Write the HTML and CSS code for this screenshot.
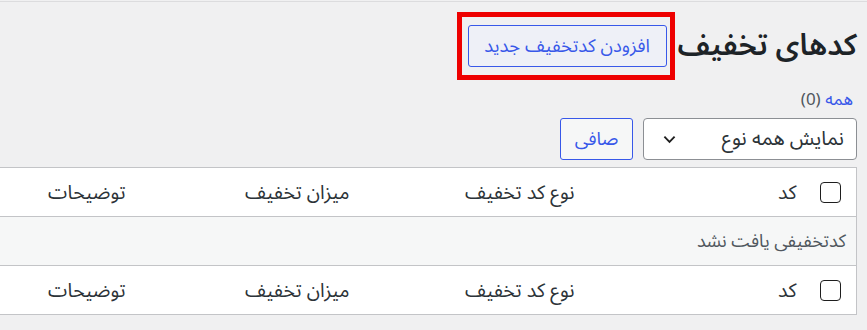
FILE: index.html
```html
<!DOCTYPE html>
<html lang="fa" dir="rtl">
<head>
    <meta charset="UTF-8">
    <meta name="viewport" content="width=device-width, initial-scale=1.0">
    <title>کدهای تخفیف</title>
    <link rel="stylesheet" href="styles.css">
</head>
<body>
    <div class="topline"></div>
    <div class="wrap">
        <!-- Page title with the add button -->
        <div class="page-head">
            <h1>کدهای تخفیف</h1>
            <span class="highlight">
                <a href="#" class="button">افزودن کدتخفیف جدید</a>
            </span>
        </div>

        <ul class="subsubsub">
            <li><a href="#">همه</a> <span class="count">(0)</span></li>
        </ul>

        <!-- Filter controls -->
        <div class="tablenav">
            <div class="select">
                <span>نمایش همه نوع</span>
                <svg class="chevron" viewBox="0 0 14 9">
                    <path d="M1.5 1.5l5.5 5.5 5.5-5.5"/>
                </svg>
            </div>
            <a href="#" class="button small">صافی</a>
        </div>

        <table class="list-table">
            <colgroup>
                <col class="col-cb">
                <col class="col-code">
                <col class="col-type">
                <col class="col-amount">
                <col>
            </colgroup>
            <thead>
                <tr>
                    <td class="cb"><span class="checkbox"></span></td>
                    <th>کد</th>
                    <th>نوع کد تخفیف</th>
                    <th>میزان تخفیف</th>
                    <th>توضیحات</th>
                </tr>
            </thead>
            <tbody>
                <tr class="no-items">
                    <td colspan="5">کدتخفیفی یافت نشد</td>
                </tr>
            </tbody>
            <tfoot>
                <tr>
                    <td class="cb"><span class="checkbox"></span></td>
                    <th>کد</th>
                    <th>نوع کد تخفیف</th>
                    <th>میزان تخفیف</th>
                    <th>توضیحات</th>
                </tr>
            </tfoot>
        </table>
    </div>
</body>
</html>
```

FILE: styles.css
```css
/* Admin list screen, RTL */
body {
    margin: 0;
    background-color: #f0f0f1;
    font-family: "Noto Sans Arabic", "Noto Naskh Arabic", "DejaVu Sans", sans-serif;
    color: #1d2327;
    font-size: 17px;
    overflow: hidden;
}

a {
    color: #3858e9;
    text-decoration: none;
}

.topline {
    height: 1px;
    margin-top: 1px;
    background-color: #dcdcde;
}

.wrap {
    padding-right: 10px;
}

.page-head {
    display: flex;
    align-items: center;
    gap: 3px;
    margin-top: 10px;
}

h1 {
    margin: 0;
    font-size: 30px;
    font-weight: 600;
    line-height: 40px;
}

/* Red annotation box round the add button */
.highlight {
    display: inline-flex;
    border: 5px solid #ee0000;
    padding: 8px 3px 8px 6px;
}

.button {
    display: inline-flex;
    align-items: center;
    justify-content: center;
    box-sizing: border-box;
    width: 199px;
    height: 42px;
    border: 1px solid #3858e9;
    border-radius: 3px;
    background-color: #eef0f7;
    color: #3858e9;
    font-size: 18.4px;
}

.button.small {
    width: 73px;
    background-color: #f6f7f7;
}

.subsubsub {
    list-style: none;
    margin: 10px 0 0;
    padding: 0 4px 0 0;
    font-size: 17px;
    line-height: 20px;
    color: #50575e;
}

.subsubsub a {
    color: #3858e9;
}

.tablenav {
    display: flex;
    gap: 10px;
    margin-top: 8px;
}

.select {
    display: flex;
    align-items: center;
    justify-content: space-between;
    box-sizing: border-box;
    width: 214px;
    height: 42px;
    padding: 0 12px 0 19px;
    border: 1px solid #8c8f94;
    border-radius: 4px;
    background-color: #fff;
    color: #2c3338;
    font-size: 20px;
}

.chevron {
    width: 13px;
    height: 9px;
    fill: none;
    stroke: #1e1e1e;
    stroke-width: 2;
}

/* Coupon table */
.list-table {
    width: 1100px;
    margin-top: 7px;
    table-layout: fixed;
    border-collapse: collapse;
    background-color: #fff;
    border: 1px solid #c3c4c7;
}

.col-cb {
    width: 50px;
}

.col-code {
    width: 222px;
}

.col-type {
    width: 225px;
}

.col-amount {
    width: 224px;
}

.list-table th,
.list-table td {
    height: 48px;
    padding: 0 10px;
    text-align: right;
    font-weight: normal;
    color: #2c3338;
    font-size: 19.5px;
}

.list-table thead tr {
    border-bottom: 1px solid #c3c4c7;
}

.list-table tfoot tr {
    border-top: 1px solid #c3c4c7;
}

.list-table td.cb {
    padding: 0 15px 0 0;
}

.checkbox {
    display: block;
    box-sizing: border-box;
    width: 21px;
    height: 21px;
    border: 1.5px solid #1e1e1e;
    border-radius: 4px;
    background-color: #fff;
}

.no-items td {
    background-color: #f6f7f7;
    color: #50575e;
    font-size: 18px;
}
```
